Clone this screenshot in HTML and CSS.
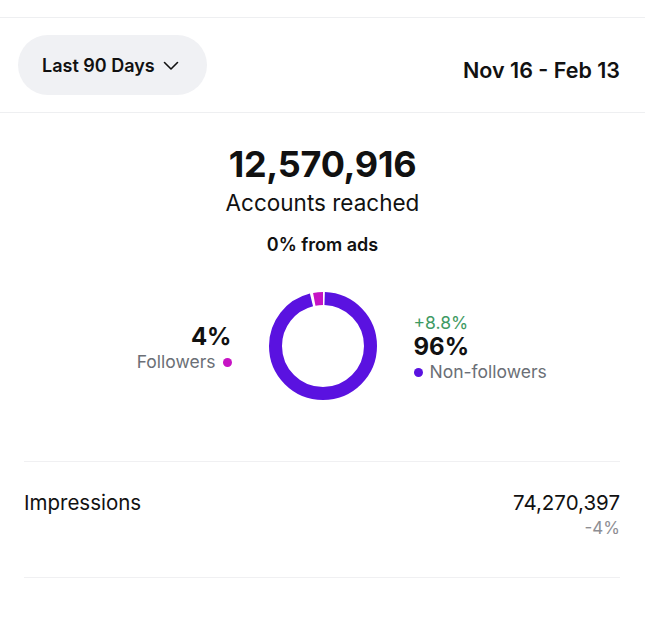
FILE: index.html
```html
<!DOCTYPE html>
<html lang="en">
  <head>
    <meta charset="UTF-8" />
    <meta name="viewport" content="width=device-width, initial-scale=1.0" />
    <title>Insights</title>
    <link rel="stylesheet" href="styles.css">
  </head>
  <body>
    <div class="topbar"></div>

    <div class="range-row">
      <button type="button" class="range-pill">
        Last 90 Days
        <svg class="chevron" width="16" height="10" viewBox="0 0 16 10">
          <path d="M1.5 1.5 L8 8 L14.5 1.5" fill="none" stroke="#111" stroke-width="1.6" stroke-linecap="round" stroke-linejoin="round" />
        </svg>
      </button>
      <div class="range-dates">Nov 16 - Feb 13</div>
    </div>

    <div class="reach">
      <div class="reach-number">12,570,916</div>
      <div class="reach-label">Accounts reached</div>
      <div class="reach-ads">0% from ads</div>

      <div class="split">
        <div class="split-side split-left">
          <div class="split-value">4%</div>
          <div class="split-label">Followers <span class="dot dot-followers"></span></div>
        </div>

        <svg class="donut" width="110" height="110" viewBox="0 0 110 110">
          <g transform="rotate(-90 55 55)">
            <circle cx="55" cy="55" r="47.5" fill="none" stroke="#5a12e0" stroke-width="13"
              stroke-dasharray="284.6 400" stroke-dashoffset="-1.7" />
            <circle cx="55" cy="55" r="47.5" fill="none" stroke="#c613c4" stroke-width="13"
              stroke-dasharray="8.8 400" stroke-dashoffset="-289.2" />
          </g>
        </svg>

        <div class="split-side split-right">
          <div class="split-change">+8.8%</div>
          <div class="split-value">96%</div>
          <div class="split-label"><span class="dot dot-non"></span> Non-followers</div>
        </div>
      </div>
    </div>

    <div class="metric-list">
      <div class="metric-row">
        <div class="metric-name">Impressions</div>
        <div class="metric-values">
          <div class="metric-number">74,270,397</div>
          <div class="metric-change">-4%</div>
        </div>
      </div>
    </div>
  </body>
</html>
```

FILE: styles.css
```css
body {
  margin: 0;
  background-color: #fff;
  font-family: Inter, "Noto Sans", sans-serif;
  color: #111;
}

.topbar {
  height: 17px;
  border-bottom: 1px solid #eeeff1;
}

.range-row {
  display: flex;
  align-items: center;
  justify-content: space-between;
  padding: 17px 25px 17px 18px;
  border-bottom: 1px solid #eeeff1;
}

.range-pill {
  display: flex;
  align-items: center;
  gap: 8px;
  height: 60px;
  padding: 0 28px 0 24px;
  border: none;
  border-radius: 30px;
  background-color: #f0f1f4;
  font-family: inherit;
  font-size: 18px;
  font-weight: 600;
  color: #111;
}

.chevron {
  margin-top: 1px;
}

.range-dates {
  font-size: 21.5px;
  font-weight: 600;
  margin-top: 10px;
}

.reach {
  display: flex;
  flex-direction: column;
  align-items: center;
  padding-top: 28px;
}

.reach-number {
  font-size: 36px;
  font-weight: 700;
  line-height: 46px;
  letter-spacing: -0.3px;
}

.reach-label {
  font-size: 22.5px;
  line-height: 28px;
  margin-top: 2px;
}

.reach-ads {
  font-size: 18px;
  font-weight: 600;
  margin-top: 17px;
}

.split {
  display: flex;
  align-items: center;
  justify-content: center;
  gap: 36px;
  margin-top: 36px;
}

.split-side {
  width: 160px;
  display: flex;
  flex-direction: column;
}

.split-left {
  align-items: flex-end;
  margin-top: 4px;
}

.split-right {
  align-items: flex-start;
  margin-top: 4px;
}

.split-value {
  font-size: 24px;
  font-weight: 700;
  line-height: 28px;
}

.split-label {
  font-size: 17.5px;
  color: #6b6f76;
  line-height: 22px;
  display: flex;
  align-items: center;
  gap: 7px;
}

.split-change {
  font-size: 17.5px;
  color: #3e9a63;
  line-height: 20px;
}

.dot {
  display: inline-block;
  width: 9px;
  height: 9px;
  border-radius: 50%;
}

.dot-followers {
  background-color: #c613c4;
}

.dot-non {
  background-color: #5a12e0;
}

.metric-list {
  margin: 60px 25px 0 24px;
}

.metric-row {
  display: flex;
  justify-content: space-between;
  align-items: flex-start;
  padding: 27px 0 38px;
  border-top: 1px solid #f0f0f2;
  border-bottom: 1px solid #f0f0f2;
}

.metric-name {
  font-size: 20.5px;
  line-height: 24px;
  margin-top: 2px;
}

.metric-values {
  text-align: right;
}

.metric-number {
  font-size: 20.5px;
  line-height: 24px;
  margin-top: 2px;
}

.metric-change {
  font-size: 17px;
  color: #8e8e93;
  line-height: 22px;
  margin-top: 2px;
}
```
